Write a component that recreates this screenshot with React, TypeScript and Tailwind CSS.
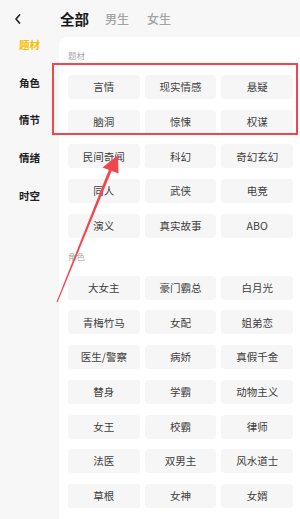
const font = { fontFamily: '"Noto Sans CJK SC", "Noto Sans", sans-serif' };

const sections = [
  {
    title: "题材",
    tags: [
      "言情", "现实情感", "悬疑",
      "脑洞", "惊悚", "权谋",
      "民间奇闻", "科幻", "奇幻玄幻",
      "同人", "武侠", "电竞",
      "演义", "真实故事", "ABO",
    ],
  },
  {
    title: "角色",
    tags: [
      "大女主", "豪门霸总", "白月光",
      "青梅竹马", "女配", "姐弟恋",
      "医生/警察", "病娇", "真假千金",
      "替身", "学霸", "动物主义",
      "女王", "校霸", "律师",
      "法医", "双男主", "风水道士",
      "草根", "女神", "女婿",
      "", "", "",
    ],
  },
];

const sideItems = ["题材", "角色", "情节", "情绪", "时空"];

export default function App() {
  return (
    <div className="relative w-[300px] h-[519px] overflow-hidden bg-[#f7f7f7]" style={font}>
      {/* header */}
      <div className="h-[37px] flex items-center">
        <div className="w-[60px] pl-[13px] pt-[1px]">
          <svg width="10" height="12" viewBox="0 0 10 12">
            <path d="M6.5 2 L3 6 L6.5 10" fill="none" stroke="#222" strokeWidth="1.7" strokeLinecap="round" strokeLinejoin="round" />
          </svg>
        </div>
        <div className="flex items-center pt-[1px]">
          <span className="text-[14.5px] leading-[20px] font-bold text-[#1a1a1a]">全部</span>
          <span className="ml-[16px] text-[12px] leading-[18px] font-medium text-[#a3a3a3]">男生</span>
          <span className="ml-[18px] text-[12px] leading-[18px] font-medium text-[#a3a3a3]">女生</span>
        </div>
      </div>

      <div className="flex">
        {/* sidebar */}
        <div className="w-[59px] shrink-0 flex flex-col items-center gap-[23.7px] pt-[1px]">
          {sideItems.map((s, i) => (
            <div
              key={s}
              className={`leading-[14px] text-[10.5px] font-bold ${
                i === 0 ? "text-[#f5c000]" : "text-[#222]"
              }`}
            >
              {s}
            </div>
          ))}
        </div>

        {/* content */}
        <div className="flex-1 bg-white rounded-tl-[8px] pl-[9px] pr-[7px] pt-[11px]">
          {sections.map((sec) => (
            <div key={sec.title} className="mb-[11px]">
              <div className="text-[8.5px] leading-[14px] text-[#aaa] mb-[13px]">{sec.title}</div>
              <div className="grid grid-cols-3 gap-x-[5px] gap-y-[10.7px]">
                {sec.tags.map((t, i) => (
                  <div
                    key={i}
                    className="h-[24px] rounded-[4px] bg-[#f6f6f6] flex items-center justify-center text-[10.5px] text-[#404040]"
                  >
                    {t}
                  </div>
                ))}
              </div>
            </div>
          ))}
        </div>
      </div>

      {/* annotation: red box */}
      <div className="absolute left-[52px] top-[63px] w-[246px] h-[72px] border-2 border-[#f2474a]" />

      {/* annotation: red arrow */}
      <svg className="absolute left-0 top-0" width="300" height="519" viewBox="0 0 300 519">
        <polygon points="56.5,302 57.6,302.3 112.6,168.6 109.8,167.4" fill="#f2474a" />
        <polygon points="118,155 102.5,167.5 118.5,173.5" fill="#f2474a" />
      </svg>
    </div>
  );
}
